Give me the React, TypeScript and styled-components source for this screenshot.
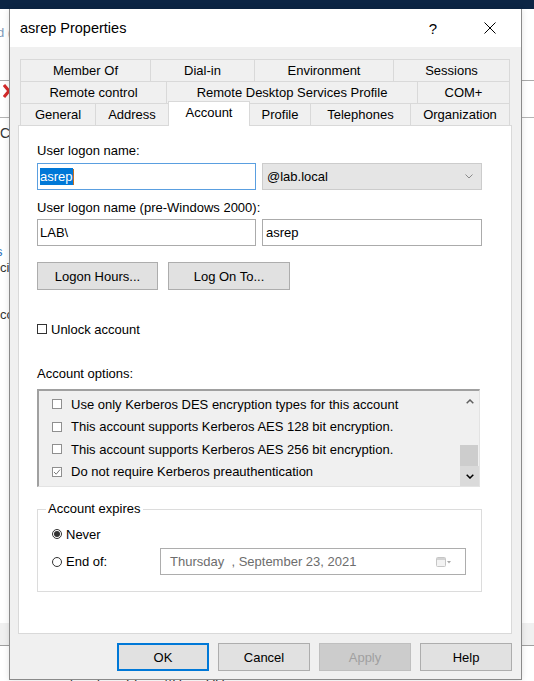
import React from "react";
import styled, { createGlobalStyle, css } from "styled-components";

const GlobalStyle = createGlobalStyle`
  html, body { margin: 0; padding: 0; background: #fff; }
  body {
    font-family: "Liberation Sans", Arial, sans-serif;
    font-size: 13px;
    color: #000;
  }
  * { box-sizing: border-box; }
`;

/* ---------- background (window under the dialog) ---------- */
const Desktop = styled.div`
  position: relative;
  width: 534px;
  height: 681px;
  overflow: hidden;
  background: #fff;
`;

const BgApp = styled.div`
  display: flex;
  flex-direction: column;
  height: 100%;
`;

const NavyBar = styled.div`
  flex: none;
  height: 9px;
  background: #0c2544;
`;

const BgMenu = styled.div`
  flex: none;
  height: 72px;
  border-bottom: 1px solid #a9a9a9;
  display: flex;
  flex-direction: column;
`;

const BgToolbar = styled.div`
  flex: none;
  height: 37px;
  border-bottom: 1px solid #b4b4b4;
  padding: 3px 0 0 3px;
`;

const BgContent = styled.div`
  flex: none;
  height: 505px;
  display: flex;
  flex-direction: column;
`;

const BgBand = styled.div`
  flex: none;
  height: 23px;
  background: #f0f0f0;
  border-bottom: 1px solid #a0a0a0;
`;

const BgFooter = styled.div`
  flex: 1;
  display: flex;
  gap: 24px;
  padding: 27px 0 0 70px;
  font-size: 13px;
  line-height: 16px;
  color: #333;
  white-space: nowrap;
`;

const BgFragment = styled.div<{ $mt: number; $ml?: number; $color?: string; $size?: number }>`
  margin-top: ${(p) => p.$mt}px;
  margin-left: ${(p) => p.$ml ?? 0}px;
  height: 16px;
  line-height: 16px;
  font-size: ${(p) => p.$size ?? 13}px;
  color: ${(p) => p.$color ?? "#222"};
  white-space: nowrap;
`;

/* ---------- dialog ---------- */
const Dialog = styled.div`
  position: absolute;
  left: 9px;
  top: 9px;
  width: 513px;
  height: 671px;
  background: #f0f0f0;
  border: 1px solid #8a8a8a;
  border-top: none;
  box-shadow: 0 0 6px rgba(0, 0, 0, 0.12);
  display: flex;
  flex-direction: column;
`;

const TitleBar = styled.div`
  flex: none;
  height: 38px;
  background: #fff;
  display: flex;
  align-items: center;
  padding: 0 17px 0 10px;
`;

const TitleText = styled.div`
  flex: 1;
  font-size: 14.5px;
  line-height: 18px;
`;

const TitleControl = styled.div<{ $w: number; $ml?: number }>`
  width: ${(p) => p.$w}px;
  margin-left: ${(p) => p.$ml ?? 0}px;
  height: 30px;
  display: flex;
  align-items: center;
  justify-content: center;
  font-size: 15px;
`;

const Body = styled.div`
  flex: 1;
  display: flex;
  flex-direction: column;
  padding: 12px 9px 0 8px;
`;

const TabStrip = styled.div`
  display: flex;
  flex-direction: column;
  padding: 0 2px;
`;

const TabRow = styled.div`
  display: flex;
  align-items: flex-end;
  height: 22px;
`;

const Tab = styled.div<{ $w: number; $active?: boolean }>`
  flex: none;
  width: ${(p) => p.$w}px;
  height: 22px;
  margin-left: -1px;
  &:first-child { margin-left: 0; }
  border: 1px solid #d9d9d9;
  border-bottom: none;
  background: #f0f0f0;
  display: flex;
  align-items: center;
  justify-content: center;
  font-size: 13px;
  line-height: 16px;
  white-space: nowrap;
  ${(p) =>
    p.$active &&
    css`
      height: 25px;
      margin-bottom: -1px;
      padding-bottom: 3px;
      background: #fff;
      position: relative;
      z-index: 1;
    `}
`;

const Panel = styled.div`
  flex: none;
  height: 509px;
  background: #fff;
  border: 1px solid #d9d9d9;
  padding-left: 18px;
  display: flex;
  flex-direction: column;
`;

const Label = styled.div<{ $mt: number }>`
  margin-top: ${(p) => p.$mt}px;
  height: 16px;
  line-height: 16px;
  font-size: 13px;
`;

const FieldRow = styled.div<{ $mt: number }>`
  margin-top: ${(p) => p.$mt}px;
  display: flex;
  gap: 6px;
  height: 27px;
`;

const TextBox = styled.div<{ $w: number; $focused?: boolean; $pl?: number }>`
  width: ${(p) => p.$w}px;
  height: 27px;
  background: #fff;
  border: 1px solid ${(p) => (p.$focused ? "#5a9fe0" : "#ababab")};
  display: flex;
  align-items: center;
  padding-left: ${(p) => p.$pl ?? 2}px;
  font-size: 13px;
  white-space: nowrap;
`;

const Selection = styled.span`
  background: #0078d7;
  color: #fff;
  line-height: 17px;
  height: 17px;
`;

const Caret = styled.span`
  width: 1px;
  height: 16px;
  background: #c8701e;
`;

const ComboBox = styled.div<{ $w: number }>`
  width: ${(p) => p.$w}px;
  height: 27px;
  background: #e5e5e5;
  border: 1px solid #cccccc;
  display: flex;
  align-items: center;
  justify-content: space-between;
  padding: 0 8px 0 4px;
  font-size: 13px;
`;

const ButtonRow = styled.div<{ $mt: number }>`
  margin-top: ${(p) => p.$mt}px;
  display: flex;
  gap: 10px;
`;

const PushButton = styled.div<{ $w: number; $default?: boolean; $disabled?: boolean }>`
  width: ${(p) => p.$w}px;
  height: 28px;
  background: ${(p) => (p.$disabled ? "#cccccc" : "#e1e1e1")};
  border: 1px solid ${(p) => (p.$default ? "#0078d7" : p.$disabled ? "#bfbfbf" : "#adadad")};
  ${(p) => p.$default && css`box-shadow: inset 0 0 0 1px #0078d7;`}
  color: ${(p) => (p.$disabled ? "#a0a0a0" : "#000")};
  display: flex;
  align-items: center;
  justify-content: center;
  font-size: 13px;
`;

const CheckRow = styled.div<{ $mt: number }>`
  margin-top: ${(p) => p.$mt}px;
  height: 16px;
  display: flex;
  align-items: center;
  gap: 4px;
  font-size: 13px;
`;

const CheckBox = styled.span<{ $tone?: "dark" | "light" }>`
  flex: none;
  width: 10px;
  height: 10px;
  background: #fff;
  border: 1px solid ${(p) => (p.$tone === "light" ? "#8f8f8f" : "#333")};
  display: flex;
  align-items: center;
  justify-content: center;
`;

const ListBox = styled.div`
  margin-top: 7px;
  width: 443px;
  height: 98px;
  background: #f0f0f0;
  border-top: 2px solid #a0a0a0;
  border-left: 2px solid #a0a0a0;
  border-right: 1px solid #e3e3e3;
  border-bottom: 1px solid #e3e3e3;
  display: flex;
`;

const ListItems = styled.div`
  flex: 1;
  display: flex;
  flex-direction: column;
  padding: 2px 0 0 13px;
`;

const ListItem = styled.div`
  height: 22.5px;
  display: flex;
  align-items: center;
  gap: 9px;
  font-size: 13px;
  white-space: nowrap;
`;

const ScrollBar = styled.div`
  flex: none;
  width: 19px;
  display: flex;
  flex-direction: column;
  background: #f0f0f0;
`;

const ScrollArrow = styled.div<{ $h: number; $hover?: boolean }>`
  height: ${(p) => p.$h}px;
  background: ${(p) => (p.$hover ? "#dadada" : "transparent")};
  display: flex;
  align-items: center;
  justify-content: center;
`;

const ScrollTrack = styled.div`
  flex: 1;
  display: flex;
  flex-direction: column;
  justify-content: flex-end;
`;

const ScrollThumb = styled.div`
  height: 21px;
  margin-right: 1px;
  background: #cdcdcd;
`;

const GroupBox = styled.fieldset`
  margin: 14px 0 0 0;
  width: 445px;
  min-width: 0;
  border: 1px solid #dcdcdc;
  padding: 9px 0 16px 14px;
  display: flex;
  flex-direction: column;
`;

const GroupLegend = styled.legend`
  margin-left: -6px;
  padding: 0 2px;
  height: 16px;
  line-height: 16px;
  font-size: 13px;
`;

const RadioRow = styled.div`
  height: 16px;
  display: flex;
  align-items: center;
  gap: 4px;
  font-size: 13px;
`;

const EndRow = styled.div`
  margin-top: 6px;
  height: 27px;
  display: grid;
  grid-template-columns: 108px 306px;
  align-items: center;
`;

const Radio = styled.span<{ $on?: boolean }>`
  flex: none;
  width: 10px;
  height: 10px;
  border-radius: 50%;
  border: 1px solid #333;
  background: #fff;
  display: flex;
  align-items: center;
  justify-content: center;
  &::after {
    content: "";
    width: 6px;
    height: 6px;
    border-radius: 50%;
    background: ${(p) => (p.$on ? "#333" : "transparent")};
  }
`;

const DatePicker = styled.div`
  height: 27px;
  background: #fff;
  border: 1px solid #adadad;
  display: flex;
  align-items: center;
  justify-content: space-between;
  padding: 0 14px 0 9px;
  font-size: 13px;
  color: #6d6d6d;
  white-space: pre;
`;

const Footer = styled.div`
  margin-top: 9px;
  display: flex;
  justify-content: flex-end;
  gap: 9px;
`;

/* ---------- icons ---------- */
const CloseIcon = () => (
  <svg width="12" height="12" viewBox="0 0 12 12">
    <path d="M0.5 0.5 L11.5 11.5 M11.5 0.5 L0.5 11.5" stroke="#000" strokeWidth="1" fill="none" />
  </svg>
);

const SmallChevron = () => (
  <svg width="8" height="5" viewBox="0 0 8 5">
    <path d="M0.5 0.5 L4 4 L7.5 0.5" stroke="#8a8a8a" strokeWidth="1" fill="none" />
  </svg>
);

const ChevronUp = () => (
  <svg width="8" height="5" viewBox="0 0 8 5">
    <path d="M0.7 4.3 L4 1 L7.3 4.3" stroke="#606060" strokeWidth="1.5" fill="none" />
  </svg>
);

const ChevronDown = () => (
  <svg width="8" height="5" viewBox="0 0 8 5">
    <path d="M0.7 0.7 L4 4 L7.3 0.7" stroke="#000" strokeWidth="1.5" fill="none" />
  </svg>
);

const CheckMark = () => (
  <svg width="8" height="8" viewBox="0 0 8 8">
    <path d="M1 4 L3.2 6.2 L7 1.6" stroke="#7a7a7a" strokeWidth="1" fill="none" />
  </svg>
);

const CalendarIcon = () => (
  <svg width="15" height="10" viewBox="0 0 15 10">
    <rect x="0.5" y="0.5" width="9" height="9" rx="1" fill="#f3f3f3" stroke="#c6c6c6" />
    <rect x="1" y="1" width="8" height="2" fill="#d3d3d3" />
    <path d="M11 4 L15 4 L13 6.5 Z" fill="#a9a9a9" />
  </svg>
);

const RedX = () => (
  <svg width="12" height="14" viewBox="0 0 12 14">
    <path d="M1 1 L11 13 M11 1 L1 13" stroke="#d42a2a" strokeWidth="3" fill="none" />
  </svg>
);

/* ---------- data ---------- */
type TabDef = { label: string; w: number; active?: boolean };

const tabRows: TabDef[][] = [
  [
    { label: "Member Of", w: 131 },
    { label: "Dial-in", w: 105 },
    { label: "Environment", w: 140 },
    { label: "Sessions", w: 117 },
  ],
  [
    { label: "Remote control", w: 147 },
    { label: "Remote Desktop Services Profile", w: 252 },
    { label: "COM+", w: 93 },
  ],
  [
    { label: "General", w: 76 },
    { label: "Address", w: 74 },
    { label: "Account", w: 82, active: true },
    { label: "Profile", w: 62 },
    { label: "Telephones", w: 101 },
    { label: "Organization", w: 100 },
  ],
];

const options: { text: string; checked: boolean }[] = [
  { text: "Use only Kerberos DES encryption types for this account", checked: false },
  { text: "This account supports Kerberos AES 128 bit encryption.", checked: false },
  { text: "This account supports Kerberos AES 256 bit encryption.", checked: false },
  { text: "Do not require Kerberos preauthentication", checked: true },
];

export default function App() {
  return (
    <>
      <GlobalStyle />
      <Desktop>
        <BgApp>
          <NavyBar />
          <BgMenu>
            <BgFragment $mt={16} $ml={-3} $color="#7d98b8">
              d (
            </BgFragment>
          </BgMenu>
          <BgToolbar>
            <RedX />
          </BgToolbar>
          <BgContent>
            <BgFragment $mt={7} $size={14} $color="#333">
              C
            </BgFragment>
            <BgFragment $mt={103} $ml={-4} $color="#2a6ebb">
              s
            </BgFragment>
            <BgFragment $mt={0} $color="#333">
              ci
            </BgFragment>
            <BgFragment $mt={31} $color="#333">
              cc
            </BgFragment>
          </BgContent>
          <BgBand />
          <BgFooter>
            <span>l</span>
            <span>l</span>
            <span>TT</span>
            <span>AD</span>
            <span>DD</span>
          </BgFooter>
        </BgApp>

        <Dialog>
          <TitleBar>
            <TitleText>asrep Properties</TitleText>
            <TitleControl $w={30}>?</TitleControl>
            <TitleControl $w={28} $ml={28}>
              <CloseIcon />
            </TitleControl>
          </TitleBar>

          <Body>
            <TabStrip>
              {tabRows.map((row, i) => (
                <TabRow key={i}>
                  {row.map((t) => (
                    <Tab key={t.label} $w={t.w} $active={t.active}>
                      {t.label}
                    </Tab>
                  ))}
                </TabRow>
              ))}
            </TabStrip>

            <Panel>
              <Label $mt={17}>User logon name:</Label>
              <FieldRow $mt={4}>
                <TextBox $w={219} $focused>
                  <Selection>asrep</Selection>
                  <Caret />
                </TextBox>
                <ComboBox $w={220}>
                  <span>@lab.local</span>
                  <SmallChevron />
                </ComboBox>
              </FieldRow>

              <Label $mt={10}>User logon name (pre-Windows 2000):</Label>
              <FieldRow $mt={3}>
                <TextBox $w={219}>LAB\</TextBox>
                <TextBox $w={220} $pl={3}>
                  asrep
                </TextBox>
              </FieldRow>

              <ButtonRow $mt={16}>
                <PushButton $w={121}>Logon Hours...</PushButton>
                <PushButton $w={122}>Log On To...</PushButton>
              </ButtonRow>

              <CheckRow $mt={31}>
                <CheckBox />
                <span>Unlock account</span>
              </CheckRow>

              <Label $mt={29}>Account options:</Label>
              <ListBox>
                <ListItems>
                  {options.map((o) => (
                    <ListItem key={o.text}>
                      <CheckBox $tone="light">{o.checked && <CheckMark />}</CheckBox>
                      <span>{o.text}</span>
                    </ListItem>
                  ))}
                </ListItems>
                <ScrollBar>
                  <ScrollArrow $h={21}>
                    <ChevronUp />
                  </ScrollArrow>
                  <ScrollTrack>
                    <ScrollThumb />
                  </ScrollTrack>
                  <ScrollArrow $h={20} $hover>
                    <ChevronDown />
                  </ScrollArrow>
                </ScrollBar>
              </ListBox>

              <GroupBox>
                <GroupLegend>Account expires</GroupLegend>
                <RadioRow>
                  <Radio $on />
                  <span>Never</span>
                </RadioRow>
                <EndRow>
                  <RadioRow>
                    <Radio />
                    <span>End of:</span>
                  </RadioRow>
                  <DatePicker>
                    <span>{"Thursday  , September 23, 2021"}</span>
                    <CalendarIcon />
                  </DatePicker>
                </EndRow>
              </GroupBox>
            </Panel>

            <Footer>
              <PushButton $w={92} $default>
                OK
              </PushButton>
              <PushButton $w={92}>Cancel</PushButton>
              <PushButton $w={92} $disabled>
                Apply
              </PushButton>
              <PushButton $w={92}>Help</PushButton>
            </Footer>
          </Body>
        </Dialog>
      </Desktop>
    </>
  );
}
